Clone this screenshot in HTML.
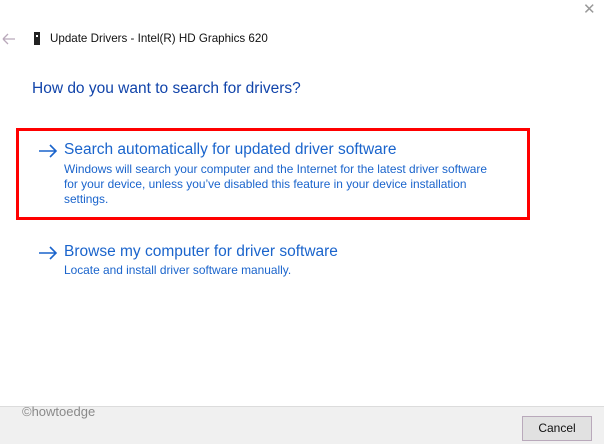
<!DOCTYPE html>
<html><head><meta charset="utf-8"><style>
body{margin:0;width:604px;height:443px;background:#fff;position:relative;overflow:hidden;font-family:"Liberation Sans",sans-serif}
.a{position:absolute;white-space:nowrap}
.blue{color:#0a5fc9}
.sub{color:#1a64cc;font-size:11.9px;line-height:15px}
</style></head><body>
<div class="a" style="left:583px;top:0px;color:#999;font-size:15px">✕</div>
<svg class="a" style="left:2px;top:33px" width="14" height="12"><path d="M1 6H13M1 6L6 1M1 6L6 11" stroke="#b9a9bb" stroke-width="1.3" fill="none"/></svg>
<div class="a" style="left:34px;top:32px;width:6px;height:13px;background:#222"></div>
<div class="a" style="left:36px;top:35px;width:2px;height:2px;background:#fff"></div>
<div class="a" style="left:50px;top:32px;font-size:11.6px;color:#111">Update Drivers - Intel(R) HD Graphics 620</div>
<div class="a blue" style="left:32px;top:80px;font-size:15.5px;color:#1144aa">How do you want to search for drivers?</div>
<div class="a" style="left:16px;top:128px;width:508px;height:86px;border:3px solid #f00"></div>
<svg class="a" style="left:38px;top:144px" width="20" height="14"><path d="M1 7H18M12 1L18 7L12 13" stroke="#1a64cc" stroke-width="1.6" fill="none"/></svg>
<div class="a blue" style="left:64px;top:141px;font-size:15.5px;color:#1a64cc">Search automatically for updated driver software</div>
<div class="a sub" style="left:64px;top:162px">Windows will search your computer and the Internet for the latest driver software<br>for your device, unless you’ve disabled this feature in your device installation<br>settings.</div>
<svg class="a" style="left:38px;top:246px" width="20" height="14"><path d="M1 7H18M12 1L18 7L12 13" stroke="#1a64cc" stroke-width="1.6" fill="none"/></svg>
<div class="a blue" style="left:64px;top:243px;font-size:15.5px;color:#1a64cc">Browse my computer for driver software</div>
<div class="a sub" style="left:64px;top:263px">Locate and install driver software manually.</div>
<div class="a" style="left:0;top:406px;width:604px;height:37px;background:#f0f0f0;border-top:1px solid #dcdcdc"></div>
<div class="a" style="left:22px;top:404px;font-size:13px;color:#8a8a8a">©howtoedge</div>
<div class="a" style="left:522px;top:416px;width:70px;height:25px;background:#e1e1e1;border:1px solid #b9a9bb;box-sizing:border-box;font-size:12px;color:#111;text-align:center;line-height:23px">Cancel</div>
</body></html>
